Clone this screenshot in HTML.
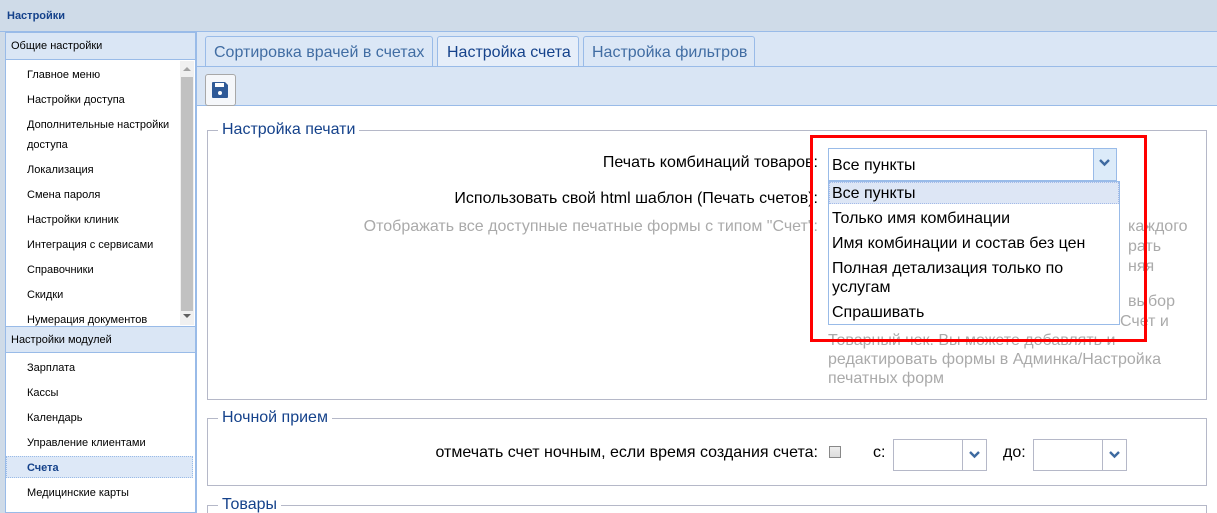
<!DOCTYPE html>
<html style="overflow:hidden;width:1217px;height:513px"><head><meta charset="utf-8"><style>
*{margin:0;padding:0;box-sizing:border-box}
body{width:1217px;height:513px;overflow:hidden;background:#cfdbe8;font-family:"Liberation Sans","DejaVu Sans",sans-serif;position:relative}
.a{position:absolute;white-space:nowrap}
.nav{font-size:11px;color:#000;left:27px}
.f16{font-size:16px}
.lab{font-size:16px;color:#000;text-align:right;right:399px}
.gray{color:#aaa;font-size:16px}
.fs{position:absolute;border:1px solid #b5b8c8;left:207px;width:1000px}
.leg{position:absolute;top:-11px;left:10px;background:#fff;padding:0 4px;font-size:16px;color:#15428b}
.dd{font-size:16px;color:#000;left:832px}
.chev{position:absolute;width:24px;height:100%;border-left:1px solid #b5b8c8;right:0;top:0;background:#fff}
</style></head><body>
<div class="a" style="left:0;top:0;width:1217px;height:32px;background:#cfdbe8;border-bottom:1px solid #99bbe8"></div>
<div class="a" style="left:7px;top:10px;font-size:11px;font-weight:bold;color:#15428b">Настройки</div>
<div class="a" style="left:5px;top:32px;width:191px;height:481px;background:#fff;border:1px solid #99bbe8"></div>
<div class="a" style="left:6px;top:33px;width:189px;height:27px;background:#dae6f5;border-bottom:1px solid #99bbe8"></div>
<div class="a" style="left:11px;top:40px;font-size:11px;color:#000">Общие настройки</div>
<div class="a" style="left:180px;top:61px;width:14px;height:264px;background:#f0f0f0"></div>
<div class="a" style="left:181px;top:77px;width:12px;height:234px;background:#c1c1c1"></div>
<div class="a" style="left:183px;top:67px;border:4px solid transparent;border-bottom:4px solid #a3a3a3;border-top:0"></div>
<div class="a" style="left:183px;top:314px;border:4px solid transparent;border-top:4px solid #606060;border-bottom:0"></div>
<div class="a nav" style="top:69px">Главное меню</div>
<div class="a nav" style="top:94px">Настройки доступа</div>
<div class="a nav" style="top:119px">Дополнительные настройки</div>
<div class="a nav" style="top:139px">доступа</div>
<div class="a nav" style="top:164px">Локализация</div>
<div class="a nav" style="top:189px">Смена пароля</div>
<div class="a nav" style="top:214px">Настройки клиник</div>
<div class="a nav" style="top:239px">Интеграция с сервисами</div>
<div class="a nav" style="top:264px">Справочники</div>
<div class="a nav" style="top:289px">Скидки</div>
<div class="a nav" style="top:314px">Нумерация документов</div>
<div class="a" style="left:6px;top:326px;width:189px;height:27px;background:#dae6f5;border-top:1px solid #99bbe8;border-bottom:1px solid #99bbe8"></div>
<div class="a" style="left:11px;top:334px;font-size:11px;color:#000">Настройки модулей</div>
<div class="a nav" style="top:362px">Зарплата</div>
<div class="a nav" style="top:387px">Кассы</div>
<div class="a nav" style="top:412px">Календарь</div>
<div class="a nav" style="top:437px">Управление клиентами</div>
<div class="a" style="left:6px;top:456px;width:187px;height:22px;background:#dde8f7;border:1px dotted #99bbe8"></div>
<div class="a nav" style="top:462px;font-weight:bold;color:#15428b">Счета</div>
<div class="a nav" style="top:487px">Медицинские карты</div>
<div class="a" style="left:196px;top:32px;width:1021px;height:481px;background:#dae6f5;border-left:1px solid #99bbe8"></div>
<div class="a" style="left:205px;top:36px;width:228px;height:30px;background:#dbe7f6;border:1px solid #99bbe8;border-bottom:0;border-radius:3px 3px 0 0"></div>
<div class="a f16" style="left:214px;top:44px;color:#416da3">Сортировка врачей в счетах</div>
<div class="a" style="left:437px;top:36px;width:142px;height:30px;background:#e6eef9;border:1px solid #99bbe8;border-bottom:0;border-radius:3px 3px 0 0"></div>
<div class="a f16" style="left:447px;top:44px;color:#15428b">Настройка счета</div>
<div class="a" style="left:583px;top:36px;width:172px;height:30px;background:#dbe7f6;border:1px solid #99bbe8;border-bottom:0;border-radius:3px 3px 0 0"></div>
<div class="a f16" style="left:592px;top:44px;color:#416da3">Настройка фильтров</div>
<div class="a" style="left:197px;top:66px;width:1020px;height:40px;background:#d9e5f4;border-top:1px solid #99bbe8;border-bottom:1px solid #99bbe8"></div>
<div class="a" style="left:205px;top:74px;width:31px;height:32px;background:#f5f7fa;border:1px solid #a8a8a8;border-radius:3px"></div>
<svg class="a" style="left:211px;top:81px" width="18" height="18" viewBox="0 0 18 18"><path d="M1 2a1 1 0 0 1 1-1h12l3 3v12a1 1 0 0 1-1 1H2a1 1 0 0 1-1-1z" fill="#2f5a97"/><rect x="4" y="2" width="9" height="4" fill="#fff"/><circle cx="9" cy="12" r="2" fill="#fff"/></svg>
<div class="a" style="left:197px;top:106px;width:1020px;height:407px;background:#fff"></div>
<div class="fs" style="top:130px;height:270px"><div class="leg" style="top:-10px">Настройка печати</div></div>
<div class="a lab" style="top:154px">Печать комбинаций товаров:</div>
<div class="a lab" style="top:190px">Использовать свой html шаблон (Печать счетов):</div>
<div class="a lab gray" style="top:218px;color:#aaa">Отображать все доступные печатные формы с типом "Счет":</div>
<div class="a gray" style="left:1128px;top:218px">каждого</div>
<div class="a gray" style="left:1128px;top:238px">рать</div>
<div class="a gray" style="left:1128px;top:258px">няя</div>
<div class="a gray" style="left:1128px;top:293px">выбор</div>
<div class="a gray" style="left:1120px;top:313px">Счет и</div>
<div class="a gray" style="left:828px;top:332px">Товарный чек. Вы можете добавлять и</div>
<div class="a gray" style="left:828px;top:351px">редактировать формы в Админка/Настройка</div>
<div class="a gray" style="left:828px;top:370px">печатных форм</div>
<div class="a" style="left:828px;top:148px;width:289px;height:33px;border:1px solid #99bbe8;background:#fff"></div>
<div class="a dd" style="top:157px">Все пункты</div>
<div class="a" style="left:1093px;top:149px;width:23px;height:31px;background:#dcebf9;border-left:1px solid #99bbe8"></div>
<svg class="a" style="left:1099px;top:159px" width="11" height="8"><path d="M1 1l4.5 4.5L10 1" stroke="#3e6aa0" stroke-width="2.4" fill="none"/></svg>
<div class="a" style="left:828px;top:181px;width:292px;height:144px;border:1px solid #99bbe8;background:#fff"></div>
<div class="a" style="left:829px;top:182px;width:290px;height:22px;background:#dde6f5;border:1px dotted #a3bae9"></div>
<div class="a dd" style="top:185px">Все пункты</div>
<div class="a dd" style="top:210px">Только имя комбинации</div>
<div class="a dd" style="top:235px">Имя комбинации и состав без цен</div>
<div class="a dd" style="top:260px">Полная детализация только по</div>
<div class="a dd" style="top:279px">услугам</div>
<div class="a dd" style="top:304px">Спрашивать</div>
<div class="a" style="left:810px;top:135px;width:337px;height:207px;border:3px solid #f00"></div>
<div class="fs" style="top:418px;height:68px"><div class="leg" style="top:-10px">Ночной прием</div></div>
<div class="a lab" style="top:444px">отмечать счет ночным, если время создания счета:</div>
<div class="a" style="left:829px;top:446px;width:12px;height:12px;border:1px solid #888;background:linear-gradient(#eee,#ddd)"></div>
<div class="a f16" style="left:873px;top:444px">с:</div>
<div class="a" style="left:893px;top:439px;width:94px;height:32px;border:1px solid #b5b8c8;background:#fff"><div class="chev"></div></div>
<svg class="a" style="left:969px;top:451px" width="11" height="8"><path d="M1 1l4.5 4.5L10 1" stroke="#3e6aa0" stroke-width="2.4" fill="none"/></svg>
<div class="a f16" style="left:1003px;top:444px">до:</div>
<div class="a" style="left:1033px;top:439px;width:94px;height:32px;border:1px solid #b5b8c8;background:#fff"><div class="chev"></div></div>
<svg class="a" style="left:1109px;top:451px" width="11" height="8"><path d="M1 1l4.5 4.5L10 1" stroke="#3e6aa0" stroke-width="2.4" fill="none"/></svg>
<div class="fs" style="top:505px;height:8px;border-bottom:0"><div class="leg" style="top:-10px">Товары</div></div>
</body></html>
